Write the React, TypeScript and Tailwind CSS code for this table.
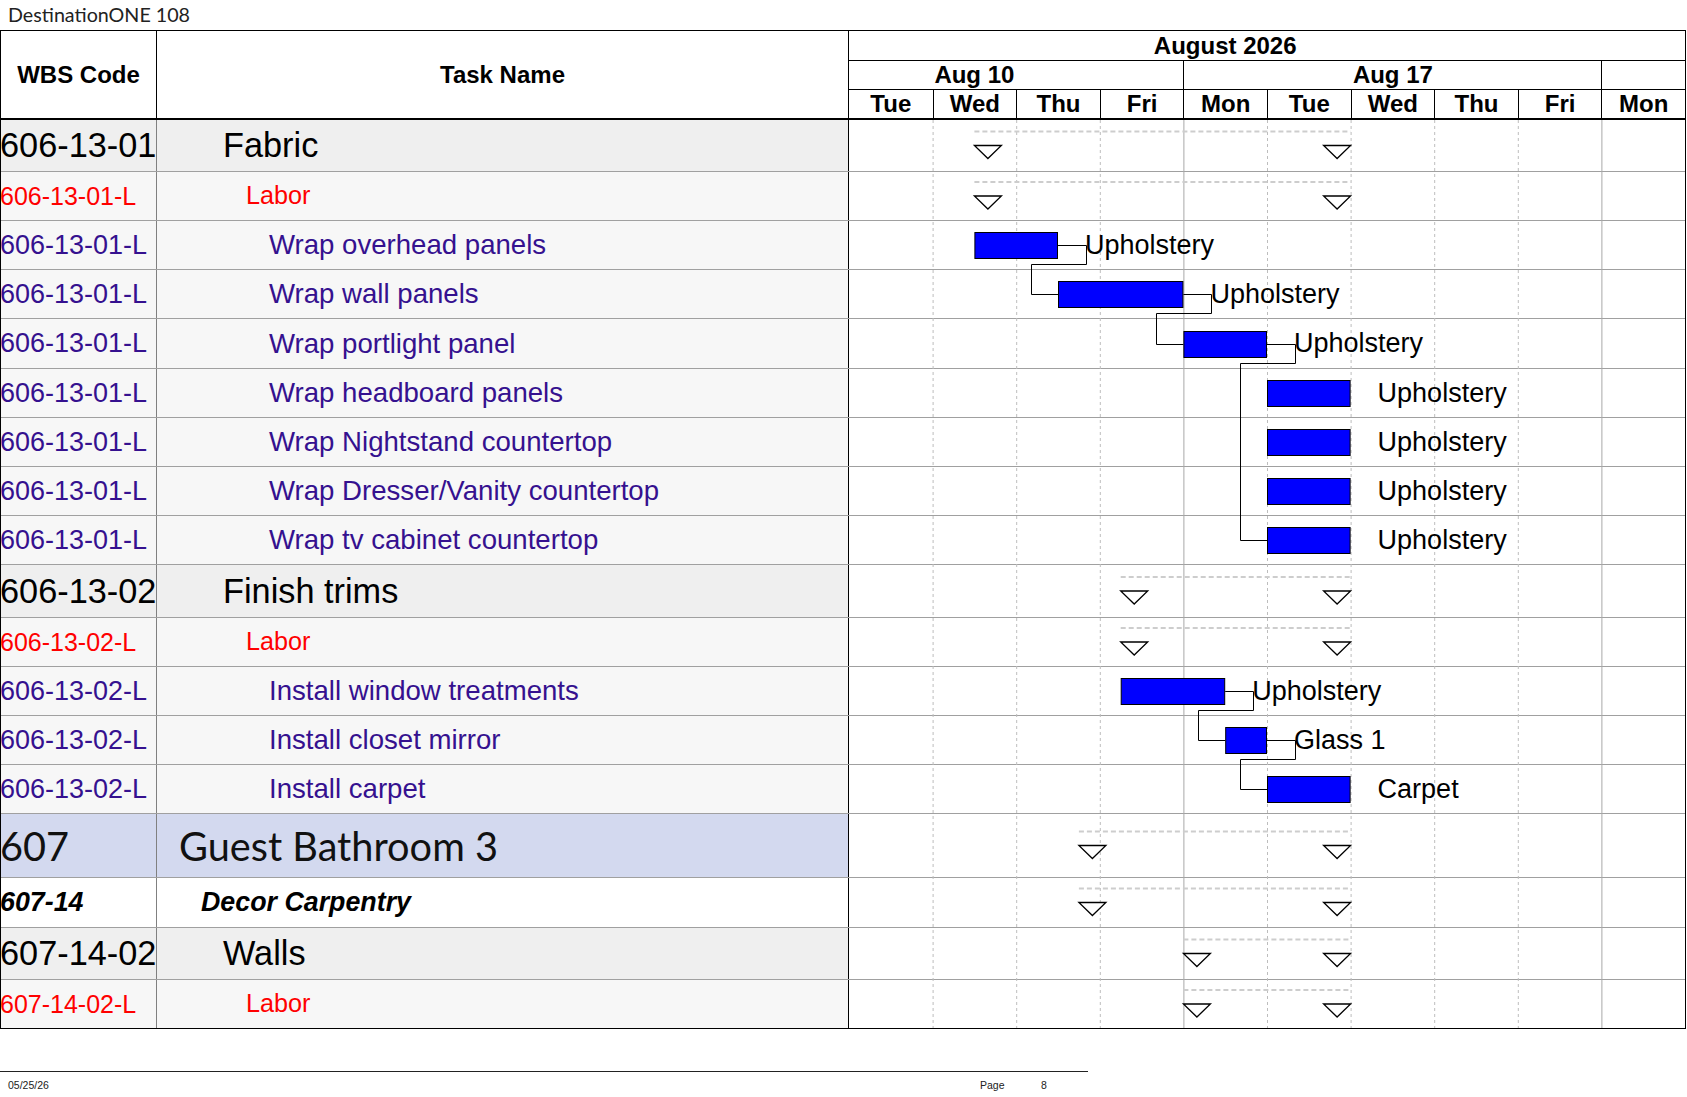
import React from "react";

type Kind = "group" | "labor" | "task" | "l1" | "l2";
type Row = {
  h: number;
  wbs: string;
  name: string;
  kind: Kind;
  bar?: [number, number];
  label?: string;
  sum?: [number, number];
};

const rows: Row[] = [
  { h: 52, wbs: "606-13-01", name: "Fabric", kind: "group", sum: [1.5, 6] },
  { h: 49, wbs: "606-13-01-L", name: "Labor", kind: "labor", sum: [1.5, 6] },
  { h: 49, wbs: "606-13-01-L", name: "Wrap overhead panels", kind: "task", bar: [1.5, 2.5], label: "Upholstery" },
  { h: 49, wbs: "606-13-01-L", name: "Wrap wall panels", kind: "task", bar: [2.5, 4], label: "Upholstery" },
  { h: 50, wbs: "606-13-01-L", name: "Wrap portlight panel", kind: "task", bar: [4, 5], label: "Upholstery" },
  { h: 49, wbs: "606-13-01-L", name: "Wrap headboard panels", kind: "task", bar: [5, 6], label: "Upholstery" },
  { h: 49, wbs: "606-13-01-L", name: "Wrap Nightstand countertop", kind: "task", bar: [5, 6], label: "Upholstery" },
  { h: 49, wbs: "606-13-01-L", name: "Wrap Dresser/Vanity countertop", kind: "task", bar: [5, 6], label: "Upholstery" },
  { h: 49, wbs: "606-13-01-L", name: "Wrap tv cabinet countertop", kind: "task", bar: [5, 6], label: "Upholstery" },
  { h: 53, wbs: "606-13-02", name: "Finish trims", kind: "group", sum: [3.25, 6] },
  { h: 49, wbs: "606-13-02-L", name: "Labor", kind: "labor", sum: [3.25, 6] },
  { h: 49, wbs: "606-13-02-L", name: "Install window treatments", kind: "task", bar: [3.25, 4.5], label: "Upholstery" },
  { h: 49, wbs: "606-13-02-L", name: "Install closet mirror", kind: "task", bar: [4.5, 5], label: "Glass 1" },
  { h: 49, wbs: "606-13-02-L", name: "Install carpet", kind: "task", bar: [5, 6], label: "Carpet" },
  { h: 64, wbs: "607", name: "Guest Bathroom 3", kind: "l1", sum: [2.75, 6] },
  { h: 50, wbs: "607-14", name: "Decor Carpentry", kind: "l2", sum: [2.75, 6] },
  { h: 52, wbs: "607-14-02", name: "Walls", kind: "group", sum: [4, 6] },
  { h: 49, wbs: "607-14-02-L", name: "Labor", kind: "labor", sum: [4, 6] },
];

const links: [number, number][] = [
  [2, 3],
  [3, 4],
  [4, 8],
  [11, 12],
  [12, 13],
];

const hClass: Record<number, string> = {
  49: "h-[49px]",
  50: "h-[50px]",
  52: "h-[52px]",
  53: "h-[53px]",
  64: "h-[64px]",
};

const kindText: Record<Kind, string> = {
  group: "font-['Liberation_Sans',Arial,sans-serif] text-[34.3px] text-black",
  labor: "font-['Liberation_Sans',Arial,sans-serif] text-[25.2px] text-[#ff0000]",
  task: "font-['Liberation_Sans',Arial,sans-serif] text-[27.6px] text-[#35118f]",
  l1: "font-['Lato',sans-serif] text-[39.7px] text-[#111111]",
  l2: "font-['Liberation_Sans',Arial,sans-serif] text-[26.8px] font-bold italic text-black",
};

const wbsSize: Record<Kind, string> = {
  group: "",
  labor: "text-[25px]",
  task: "text-[27px]",
  l1: "",
  l2: "",
};

const kindPad: Record<Kind, string> = {
  group: "pl-[66px]",
  labor: "pl-[89px]",
  task: "pl-[112px]",
  l1: "pl-[22px]",
  l2: "pl-[44px]",
};

const kindBg: Record<Kind, string> = {
  group: "bg-[#efefef]",
  labor: "bg-[#f7f7f7]",
  task: "bg-[#f7f7f7]",
  l1: "bg-[#d3d9ef]",
  l2: "bg-white",
};

const D = 83.6;
const X = (k: number) => D * k;

const tops: number[] = [];
{
  let t = 0;
  for (const r of rows) {
    tops.push(t);
    t += r.h;
  }
}
const totalH = rows.reduce((a, r) => a + r.h, 0);
const center = (i: number) => tops[i] + (rows[i].h - 1) / 2;

const days = ["Tue", "Wed", "Thu", "Fri", "Mon", "Tue", "Wed", "Thu", "Fri", "Mon"];

function GanttSvg() {
  return (
    <svg
      className="absolute left-0 top-0"
      width={836}
      height={totalH}
      viewBox={`0 0 836 ${totalH}`}
    >
      {Array.from({ length: 9 }, (_, i) => i + 1).map((k) =>
        k === 4 || k === 9 ? (
          <line key={k} x1={X(k) + 0.5} x2={X(k) + 0.5} y1={0} y2={totalH - 1} stroke="#a9a9a9" strokeWidth={1} />
        ) : (
          <line
            key={k}
            x1={X(k) + 0.5}
            x2={X(k) + 0.5}
            y1={0}
            y2={totalH - 1}
            stroke="#bdbdbd"
            strokeWidth={1}
            strokeDasharray="3 3"
          />
        )
      )}
      {rows.map((r, i) => {
        if (!r.sum) return null;
        const c = center(i);
        const xs = X(r.sum[0]);
        const xe = X(r.sum[1]);
        return (
          <g key={"s" + i}>
            <line x1={xs} x2={xe} y1={c - 14} y2={c - 14} stroke="#cdcdcd" strokeWidth={2} strokeDasharray="5 3" />
            <polygon
              points={`${xs},${c} ${xs + 27},${c} ${xs + 13.5},${c + 13}`}
              fill="white"
              stroke="black"
              strokeWidth={1.3}
            />
            <polygon
              points={`${xe - 27},${c} ${xe},${c} ${xe - 13.5},${c + 13}`}
              fill="white"
              stroke="black"
              strokeWidth={1.3}
            />
          </g>
        );
      })}
      {links.map(([a, b]) => {
        const ra = rows[a];
        const rb = rows[b];
        const xe = X(ra.bar![1]);
        const xs = X(rb.bar![0]);
        const ca = Math.round(center(a)) + 0.5;
        const cb = Math.round(center(b)) + 0.5;
        const yb = tops[a] + ra.h - 6 + 0.5;
        const d = `M ${xe} ${ca} H ${Math.round(xe + 28) + 0.5} V ${yb} H ${Math.round(xs - 27.5) + 0.5} V ${cb} H ${xs}`;
        return <path key={"l" + a + "-" + b} d={d} fill="none" stroke="black" strokeWidth={1} />;
      })}
      {rows.map((r, i) => {
        if (!r.bar) return null;
        const c = center(i);
        const xs = X(r.bar[0]);
        const xe = X(r.bar[1]);
        return (
          <g key={"b" + i}>
            <rect
              x={xs + 0.5}
              y={Math.round(c - 13) + 0.5}
              width={xe - xs - 1}
              height={26}
              fill="#0000ff"
              stroke="black"
              strokeWidth={1}
            />
            <text
              x={xe + 27}
              y={c + 8.5}
              fontFamily="'Liberation Sans', Arial, sans-serif"
              fontSize={27}
              fill="black"
            >
              {r.label}
            </text>
          </g>
        );
      })}
    </svg>
  );
}

export default function App() {
  return (
    <div className="w-[1687px] h-[1097px] bg-white overflow-hidden font-['Liberation_Sans',Arial,sans-serif] text-black">
      <div className="h-[30px] pl-[8px] flex items-center font-['Lato',sans-serif] text-[19.7px] text-[#222222] leading-none">
        DestinationONE 108
      </div>

      <div className="w-[1686px] border-l border-r border-black">
        <div className="flex h-[90px] border-t border-b-2 border-black text-[24px] font-bold leading-none">
          <div className="w-[156px] border-r border-black flex items-center justify-center">WBS Code</div>
          <div className="w-[692px] border-r border-black flex items-center justify-center">Task Name</div>
          <div className="flex-1 flex flex-col">
            <div className="h-[30px] border-b border-black flex">
              <div className="w-[90%] flex items-center justify-center">August 2026</div>
            </div>
            <div className="h-[29px] border-b border-black grid grid-cols-10">
              <div className="col-span-4 flex">
                <div className="w-3/4 flex items-center justify-center">Aug 10</div>
              </div>
              <div className="col-span-5 border-l border-black flex items-center justify-center">Aug 17</div>
              <div className="col-span-1 border-l border-black"></div>
            </div>
            <div className="flex-1 grid grid-cols-10">
              {days.map((d, i) => (
                <div
                  key={i}
                  className={
                    i === 0
                      ? "flex items-center justify-center"
                      : "flex items-center justify-center border-l border-black"
                  }
                >
                  {d}
                </div>
              ))}
            </div>
          </div>
        </div>

        <div className="flex">
          <div className="w-[848px] flex flex-col">
            {rows.map((r, i) => {
              const last = i === rows.length - 1;
              return (
                <div
                  key={i}
                  className={`flex ${hClass[r.h]} ${kindBg[r.kind]} border-b ${
                    last ? "border-black" : "border-[#a0a0a0]"
                  } ${kindText[r.kind]} leading-none whitespace-nowrap`}
                >
                  <div className={`w-[156px] shrink-0 border-r border-[#808080] flex items-center ${wbsSize[r.kind]}`}>
                    <span className="-ml-[1px]">{r.wbs}</span>
                  </div>
                  <div className={`w-[692px] shrink-0 border-r border-black flex items-center ${kindPad[r.kind]}`}>
                    {r.name}
                  </div>
                </div>
              );
            })}
          </div>
          <div className="flex-1 relative flex flex-col bg-white">
            {rows.map((r, i) => (
              <div
                key={i}
                className={`${hClass[r.h]} border-b ${
                  i === rows.length - 1 ? "border-black" : "border-[#a0a0a0]"
                }`}
              ></div>
            ))}
            <GanttSvg />
          </div>
        </div>
      </div>

      <div className="mt-[42px] w-[1088px] border-t border-[#222222] h-[27px] flex items-center text-[10.5px] text-[#222222] leading-none">
        <div className="w-[980px] pl-[8px]">05/25/26</div>
        <div className="w-[61px]">Page</div>
        <div>8</div>
      </div>
    </div>
  );
}
